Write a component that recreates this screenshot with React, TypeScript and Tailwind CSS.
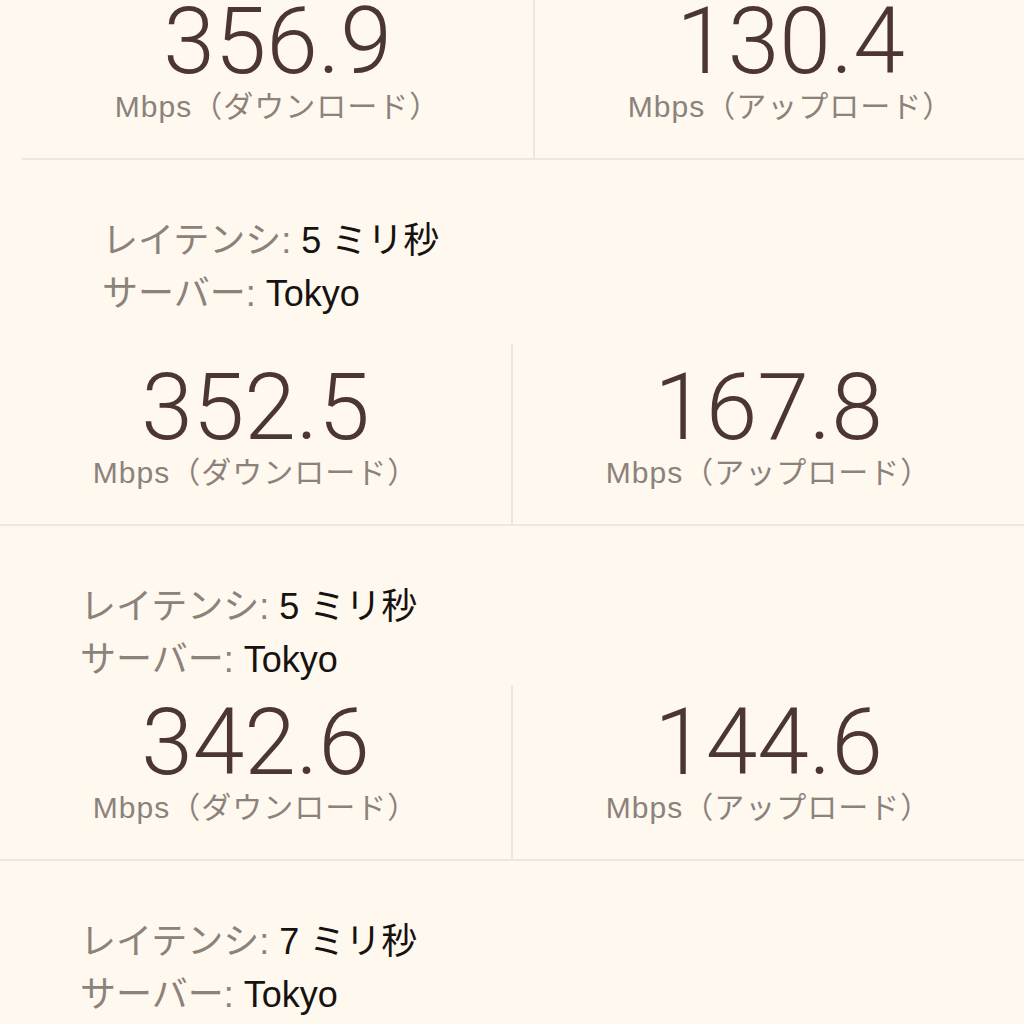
const font = { fontFamily: '"Liberation Sans", "Noto Sans CJK JP", sans-serif' }

type Result = { down: string; up: string; latency: string }

function Cell({ value, label, divider }: { value: string; label: string; divider?: boolean }) {
  return (
    <div
      className={
        'flex-1 flex flex-col items-center justify-end pb-[36px] ' +
        (divider ? 'border-r-2 border-[#efe5de]' : '')
      }
    >
      <div className="text-[93px] leading-none font-light text-[#4b3632]" style={{ fontFamily: 'Roboto, "Liberation Sans", sans-serif' }}>
        {value}
      </div>
      <div className="mt-[4px] text-[30px] leading-none tracking-[1px] text-[#8c827c]">{label}</div>
    </div>
  )
}

function Table({ r, height }: { r: Result; height: string }) {
  return (
    <div className={'flex border-b-2 border-[#efe6dd] ' + height}>
      <Cell value={r.down} label="Mbps（ダウンロード）" divider />
      <Cell value={r.up} label="Mbps（アップロード）" />
    </div>
  )
}

function Info({ latency, height }: { latency: string; height: string }) {
  return (
    <div className={'pl-[80px] pt-[54px] ' + height}>
      <div className="text-[36px] leading-[53px]">
        <span className="text-[#8c827c]">レイテンシ:</span>
        <span className="text-[#161210]"> {latency} ミリ秒</span>
      </div>
      <div className="text-[36px] leading-[53px]">
        <span className="text-[#8c827c]">サーバー: </span>
        <span className="text-[#161210]">Tokyo</span>
      </div>
    </div>
  )
}

export default function App() {
  const results: Result[] = [
    { down: '356.9', up: '130.4', latency: '5' },
    { down: '352.5', up: '167.8', latency: '5' },
    { down: '342.6', up: '144.6', latency: '7' },
  ]
  return (
    <div className="w-[1024px] h-[1024px] overflow-hidden bg-[#fff8ee]" style={font}>
      <div className="ml-[22px] w-[1024px]">
        <Table r={results[0]} height="h-[160px]" />
        <Info latency={results[0].latency} height="h-[184px]" />
      </div>
      <Table r={results[1]} height="h-[182px]" />
      <Info latency={results[1].latency} height="h-[159px]" />
      <Table r={results[2]} height="h-[176px]" />
      <Info latency={results[2].latency} height="h-[163px]" />
    </div>
  )
}
